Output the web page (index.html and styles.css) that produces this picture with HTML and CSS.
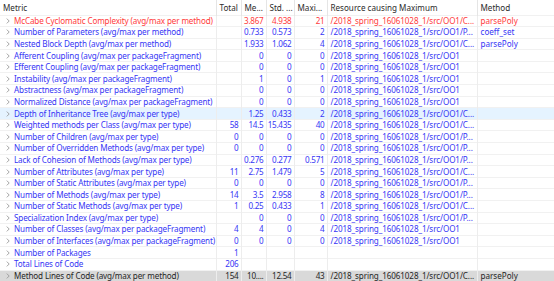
FILE: index.html
```html
<!DOCTYPE html>
<html lang="en">
<head>
    <meta charset="UTF-8">
    <title>Metrics</title>
    <link rel="stylesheet" href="styles.css">
</head>
<body>
    <table class="metrics">
        <colgroup>
            <col class="c-metric">
            <col class="c-total">
            <col class="c-mean">
            <col class="c-std">
            <col class="c-max">
            <col class="c-res">
            <col class="c-method">
        </colgroup>
        <thead>
            <tr>
                <th class="name-head">Metric</th>
                <th>Total</th>
                <th>Me...</th>
                <th>Std. ...</th>
                <th>Maxi...</th>
                <th>Resource causing Maximum</th>
                <th>Method</th>
            </tr>
        </thead>
        <tbody id="rows"></tbody>
    </table>

    <script>
        // metric, total, mean, std, max, resource, method, kind
        let P = "/2018_spring_16061028_1/src/OO1";
        let rows = [
            ["McCabe Cyclomatic Complexity (avg/max per method)", "", "3.867", "4.938", "21", P + "/C...", "parsePoly", "red"],
            ["Number of Parameters (avg/max per method)", "", "0.733", "0.573", "2", P + "/P...", "coeff_set"],
            ["Nested Block Depth (avg/max per method)", "", "1.933", "1.062", "4", P + "/C...", "parsePoly"],
            ["Afferent Coupling (avg/max per packageFragment)", "", "0", "0", "0", P, ""],
            ["Efferent Coupling (avg/max per packageFragment)", "", "0", "0", "0", P, ""],
            ["Instability (avg/max per packageFragment)", "", "1", "0", "1", P, ""],
            ["Abstractness (avg/max per packageFragment)", "", "0", "0", "0", P, ""],
            ["Normalized Distance (avg/max per packageFragment)", "", "0", "0", "0", P, ""],
            ["Depth of Inheritance Tree (avg/max per type)", "", "1.25", "0.433", "2", P + "/C...", "", "hover"],
            ["Weighted methods per Class (avg/max per type)", "58", "14.5", "15.435", "40", P + "/C...", ""],
            ["Number of Children (avg/max per type)", "0", "0", "0", "0", P + "/P...", ""],
            ["Number of Overridden Methods (avg/max per type)", "0", "0", "0", "0", P + "/P...", ""],
            ["Lack of Cohesion of Methods (avg/max per type)", "", "0.276", "0.277", "0.571", P + "/P...", ""],
            ["Number of Attributes (avg/max per type)", "11", "2.75", "1.479", "5", P + "/C...", ""],
            ["Number of Static Attributes (avg/max per type)", "0", "0", "0", "0", P + "/P...", ""],
            ["Number of Methods (avg/max per type)", "14", "3.5", "2.958", "8", P + "/P...", ""],
            ["Number of Static Methods (avg/max per type)", "1", "0.25", "0.433", "1", P + "/C...", ""],
            ["Specialization Index (avg/max per type)", "", "0", "0", "0", P + "/P...", ""],
            ["Number of Classes (avg/max per packageFragment)", "4", "4", "0", "4", P, ""],
            ["Number of Interfaces (avg/max per packageFragment)", "0", "0", "0", "0", P, ""],
            ["Number of Packages", "1", "", "", "", "", ""],
            ["Total Lines of Code", "206", "", "", "", "", ""],
            ["Method Lines of Code (avg/max per method)", "154", "10....", "12.54", "43", P + "/C...", "parsePoly", "selected"]
        ];

        let chevron = '<svg class="chev" width="4" height="6" viewBox="0 0 4 6"><path d="M0.8 0.6L3.2 3L0.8 5.4" fill="none" stroke="#9a9a9a" stroke-width="0.9"/></svg>';
        let html = "";
        rows.forEach(function (r) {
            html += '<tr class="' + (r[7] || "") + '">';
            html += '<td class="name">' + chevron + r[0] + '</td>';
            html += '<td class="num">' + r[1] + '</td>';
            html += '<td class="num">' + r[2] + '</td>';
            html += '<td class="num">' + r[3] + '</td>';
            html += '<td class="num">' + r[4] + '</td>';
            html += '<td class="res">' + r[5] + '</td>';
            html += '<td>' + r[6] + '</td>';
            html += '</tr>';
        });
        document.getElementById("rows").innerHTML = html;
    </script>
</body>
</html>
```

FILE: styles.css
```css
* { box-sizing: border-box; }
body {
    margin: 0;
    background: #ffffff;
    font-family: "Noto Sans", "Open Sans", sans-serif;
    font-size: 8.1px;
}
.metrics {
    border-collapse: collapse;
    table-layout: fixed;
    width: 554px;
}
.c-metric { width: 216px; }
.c-total { width: 25px; }
.c-mean { width: 25px; }
.c-std { width: 28px; }
.c-max { width: 33px; }
.c-res { width: 150px; }
.c-method { width: 77px; }

th {
    height: 15px;
    padding: 0 3px;
    font-weight: normal;
    text-align: left;
    color: #2b2b2b;
    border-right: 1px solid #e5e5e5;
    white-space: nowrap;
    overflow: hidden;
}
th:last-child { border-right: none; }
.name-head { padding-left: 3px; }

td {
    height: 11.6px;
    line-height: 10px;
    padding: 0 3px;
    color: #3636f5;
    border-right: 1px solid #ededed;
    border-top: 1px solid #f1f1f1;
    white-space: nowrap;
    overflow: hidden;
}
td:last-child { border-right: none; }
td.num {
    text-align: right;
    padding: 0 2px 0 0;
    letter-spacing: -0.25px;
}
td.name {
    padding: 0 0 0 6px;
    letter-spacing: -0.13px;
}
td.res { letter-spacing: -0.1px; }
.chev {
    margin-right: 4px;
    vertical-align: 0;
}

tr.red td { color: #ff3b3b; }
tr.hover td { background: #e5f3ff; }
tr.selected td {
    background: #d9d9d9;
    color: #262626;
}
```
